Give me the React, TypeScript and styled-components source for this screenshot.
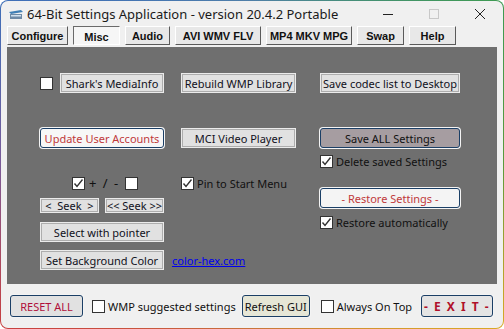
import React from "react";
import styled, { createGlobalStyle, css } from "styled-components";

const Global = createGlobalStyle`
  html, body { margin: 0; padding: 0; background: #ffffff; }
  body { font-family: "Noto Sans", "Liberation Sans", sans-serif; }
  * { box-sizing: border-box; }
`;

const Frame = styled.div`
  width: 504px;
  height: 329px;
  border-radius: 8px;
  padding: 1px;
  background: conic-gradient(
    from 0deg,
    #4f7fa8 0deg,
    #3e9a52 57deg,
    #5a9a3a 90deg,
    #d9a826 123deg,
    #c9743a 180deg,
    #c84040 237deg,
    #7a5a98 270deg,
    #3f6fb8 303deg,
    #4f7fa8 360deg
  );
`;

const Win = styled.div`
  width: 100%;
  height: 100%;
  border-radius: 7px;
  background: #f0f0f0;
  display: flex;
  flex-direction: column;
  overflow: hidden;
`;

const TitleBar = styled.div`
  height: 25px;
  display: flex;
  align-items: center;
  padding-left: 7px;
  color: #1a1a1a;
  font-size: 13px;
`;

const TitleText = styled.span`
  margin-left: 3px;
  flex: 1;
  white-space: nowrap;
`;

const Ctrl = styled.div`
  width: 46px;
  height: 25px;
  display: flex;
  align-items: center;
  justify-content: center;
`;

const Tabs = styled.div`
  display: flex;
  gap: 5px;
  padding-left: 6px;
  height: 20px;
`;

const Tab = styled.div<{ $active?: boolean; $w: number }>`
  width: ${(p) => p.$w}px;
  height: 19px;
  display: flex;
  align-items: center;
  justify-content: center;
  font-family: "Liberation Sans", Arial, sans-serif;
  font-weight: bold;
  font-size: 11px;
  color: #111;
  background: #e8e8e8;
  border-top: 1px solid #ffffff;
  border-left: 1px solid #ffffff;
  border-right: 1px solid #5a5a5a;
  border-bottom: 1px solid #5a5a5a;
  ${(p) =>
    p.$active &&
    css`
      background: #f6f6f6;
      border-top: 1px solid #6a6a6a;
      border-left: 1px solid #6a6a6a;
      border-right: 1px solid #ffffff;
      border-bottom: 1px solid #ffffff;
      padding-top: 3px;
    `}
`;

const Panel = styled.div`
  margin: 1px 6px 0 6px;
  height: 237px;
  background: #6f6f6f;
  display: flex;
  padding-left: 33px;
`;

const Col = styled.div<{ $w: number; $ml?: number }>`
  width: ${(p) => p.$w}px;
  margin-left: ${(p) => p.$ml ?? 0}px;
  display: flex;
  flex-direction: column;
  align-items: flex-start;
`;

const Row = styled.div<{ $mt: number; $ml?: number; $gap?: number }>`
  margin-top: ${(p) => p.$mt}px;
  margin-left: ${(p) => p.$ml ?? 0}px;
  display: flex;
  align-items: center;
  gap: ${(p) => p.$gap ?? 0}px;
  white-space: nowrap;
`;

const Btn = styled.div<{ $w: number; $h?: number; $fs?: number; $ml?: number }>`
  width: ${(p) => p.$w}px;
  height: ${(p) => p.$h ?? 20}px;
  margin-left: ${(p) => p.$ml ?? 0}px;
  display: flex;
  align-items: center;
  justify-content: center;
  background: #e1e1e1;
  border: 1px solid #ebebeb;
  box-shadow: inset 0 0 0 1px #adadad;
  font-size: ${(p) => p.$fs ?? 11}px;
  color: #101020;
  white-space: pre;
  overflow: hidden;
`;

const FocusBtn = styled.div<{
  $w: number;
  $h?: number;
  $bg: string;
  $color: string;
  $fs?: number;
  $bold?: boolean;
  $ls?: number;
  $ml?: number;
}>`
  width: ${(p) => p.$w}px;
  height: ${(p) => p.$h ?? 20}px;
  margin-left: ${(p) => p.$ml ?? 0}px;
  display: flex;
  align-items: center;
  justify-content: center;
  background: ${(p) => p.$bg};
  border: 1px solid #1b3f66;
  border-radius: 3px;
  box-shadow: 0 0 0 1px #f4f4f4;
  color: ${(p) => p.$color};
  font-size: ${(p) => p.$fs ?? 11}px;
  font-weight: ${(p) => (p.$bold ? 700 : 400)};
  letter-spacing: ${(p) => p.$ls ?? 0}px;
  white-space: pre;
  overflow: hidden;
`;

const Box = styled.span<{ $ml?: number }>`
  width: 13px;
  height: 13px;
  margin-left: ${(p) => p.$ml ?? 0}px;
  background: #ffffff;
  border: 1px solid #333333;
  display: inline-flex;
  align-items: center;
  justify-content: center;
  flex: none;
`;

const Label = styled.span<{ $ml?: number; $fs?: number; $ws?: number }>`
  margin-left: ${(p) => p.$ml ?? 3}px;
  font-size: ${(p) => p.$fs ?? 11}px;
  line-height: 15px;
  word-spacing: ${(p) => p.$ws ?? 0}px;
  color: #111;
  white-space: nowrap;
`;

const Link = styled.span`
  margin-left: 8px;
  font-size: 11px;
  line-height: 15px;
  color: #0000ee;
  text-decoration: underline;
  white-space: nowrap;
`;

const Bottom = styled.div`
  flex: 1;
  display: flex;
  align-items: center;
  padding-left: 9px;
`;

const Check = ({ on, ml }: { on?: boolean; ml?: number }) => (
  <Box $ml={ml}>
    {on && (
      <svg width="11" height="11" viewBox="0 0 11 11">
        <path d="M1.5 5.5 L4 8.5 L9.5 1.5" fill="none" stroke="#333" strokeWidth="1.4" />
      </svg>
    )}
  </Box>
);

const AppIcon = () => (
  <svg width="16" height="12" viewBox="0 0 16 12">
    <path d="M1 4 L13 2 L15 4 L3 6 Z" fill="#3f7fb5" />
    <rect x="2" y="6" width="12" height="5" fill="#6d8aa6" />
    <rect x="3" y="7" width="10" height="1.5" fill="#cfe0ee" />
  </svg>
);

export default function App() {
  return (
    <>
      <Global />
      <Frame>
        <Win>
          <TitleBar>
            <AppIcon />
            <TitleText>64-Bit Settings Application - version 20.4.2 Portable</TitleText>
            <Ctrl>
              <svg width="12" height="12" viewBox="0 0 12 12">
                <path d="M1 6.5 H11" stroke="#222" strokeWidth="1" />
              </svg>
            </Ctrl>
            <Ctrl>
              <svg width="12" height="12" viewBox="0 0 12 12">
                <rect x="1.5" y="1.5" width="9" height="9" fill="none" stroke="#c8c8c8" strokeWidth="1" />
              </svg>
            </Ctrl>
            <Ctrl>
              <svg width="12" height="12" viewBox="0 0 12 12">
                <path d="M1 1 L11 11 M11 1 L1 11" stroke="#222" strokeWidth="1" />
              </svg>
            </Ctrl>
          </TitleBar>
          <Tabs>
            <Tab $w={61}>Configure</Tab>
            <Tab $w={47} $active>Misc</Tab>
            <Tab $w={45}>Audio</Tab>
            <Tab $w={86}>AVI WMV FLV</Tab>
            <Tab $w={86}>MP4 MKV MPG</Tab>
            <Tab $w={47}>Swap</Tab>
            <Tab $w={47}>Help</Tab>
          </Tabs>
          <Panel>
            <Col $w={124}>
              <Row $mt={26}>
                <Check />
                <Btn $w={104} $ml={7}>Shark's MediaInfo</Btn>
              </Row>
              <Row $mt={35}>
                <FocusBtn $w={124} $bg="#f7f7f7" $color="#c0393b">Update User Accounts</FocusBtn>
              </Row>
              <Row $mt={28} $ml={32}>
                <Check on />
                <Label $ml={4} $fs={13} $ws={3}>+ / -</Label>
                <Check ml={7} />
              </Row>
              <Row $mt={7} $gap={6}>
                <Btn $w={59} $h={15} $fs={11}>{"<  Seek  >"}</Btn>
                <Btn $w={59} $h={15} $fs={11}>{"<< Seek >>"}</Btn>
              </Row>
              <Row $mt={9}>
                <Btn $w={124}>Select with pointer</Btn>
              </Row>
              <Row $mt={8}>
                <Btn $w={124}>Set Background Color</Btn>
                <Link>color-hex.com</Link>
              </Row>
            </Col>
            <Col $w={115} $ml={17}>
              <Row $mt={26}>
                <Btn $w={115}>Rebuild WMP Library</Btn>
              </Row>
              <Row $mt={35}>
                <Btn $w={115}>MCI Video Player</Btn>
              </Row>
              <Row $mt={28}>
                <Check on />
                <Label>Pin to Start Menu</Label>
              </Row>
            </Col>
            <Col $w={140} $ml={24}>
              <Row $mt={26}>
                <Btn $w={140}>Save codec list to Desktop</Btn>
              </Row>
              <Row $mt={35}>
                <FocusBtn $w={140} $bg="#a69da1" $color="#111">Save ALL Settings</FocusBtn>
              </Row>
              <Row $mt={6}>
                <Check on />
                <Label>Delete saved Settings</Label>
              </Row>
              <Row $mt={19}>
                <FocusBtn $w={140} $bg="#f4f4f4" $color="#c0393b">- Restore Settings -</FocusBtn>
              </Row>
              <Row $mt={7}>
                <Check on />
                <Label>Restore automatically</Label>
              </Row>
            </Col>
          </Panel>
          <Bottom>
            <FocusBtn $w={73} $h={22} $bg="#e1e1e1" $color="#b0103a">RESET ALL</FocusBtn>
            <Check ml={9} />
            <Label>WMP suggested settings</Label>
            <FocusBtn $w={68} $h={22} $bg="#e6e6d6" $color="#111" $ml={6}>Refresh GUI</FocusBtn>
            <Check ml={11} />
            <Label>Always On Top</Label>
            <FocusBtn $w={72} $h={22} $bg="#e4e4e4" $color="#b0102a" $fs={12} $bold $ls={1.5} $ml={9}>- E X I T -</FocusBtn>
          </Bottom>
        </Win>
      </Frame>
    </>
  );
}
